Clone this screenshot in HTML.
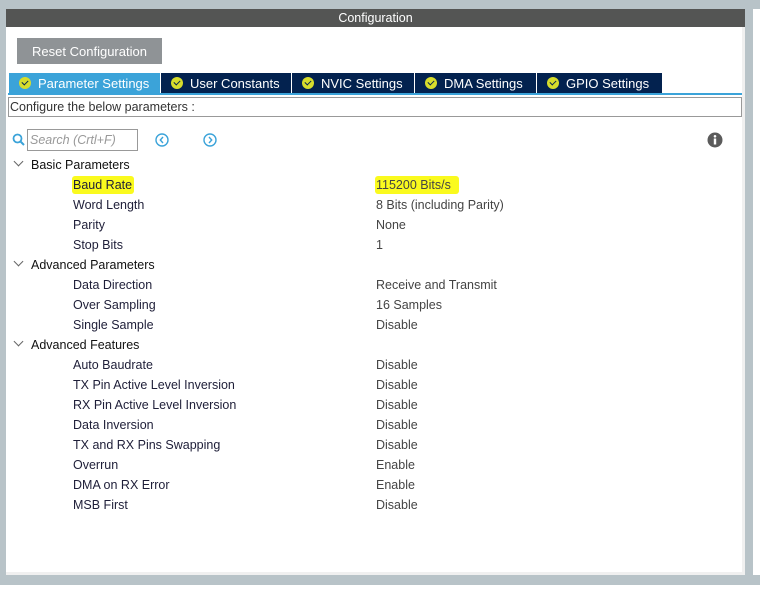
<!DOCTYPE html>
<html><head><meta charset="utf-8"><style>
*{margin:0;padding:0;box-sizing:border-box}
body{width:760px;height:594px;background:#fff;position:relative;overflow:hidden;font-family:"Liberation Sans",Arial,sans-serif;font-size:12.5px}
.a{position:absolute}
.t{position:absolute;white-space:nowrap;line-height:16px;margin-top:1px}
.tab{position:absolute;top:73px;height:20px;background:#03224f;color:#fff;font-size:13px;line-height:21px;border-right:1px solid #fff}
.tab i{position:absolute;left:10px;top:4px;width:12px;height:12px;border-radius:50%;background:#d7dd2c}
.tab i:after{content:"";position:absolute;left:3px;top:2.5px;width:5px;height:3px;border-left:1.6px solid #03224f;border-bottom:1.6px solid #03224f;transform:rotate(-45deg)}
.tab span{position:absolute;left:29px}
.k{color:#1e1e38}.v{color:#444}
.g{color:#111}
.chev{position:absolute;width:7px;height:7px;border-right:1.2px solid #666;border-bottom:1.2px solid #666;transform:rotate(45deg)}
</style></head><body>
<div class="a" style="left:0;top:0;width:760px;height:9px;background:#b8c3c8"></div>
<div class="a" style="left:0;top:0;width:6px;height:585px;background:#b8c3c8"></div>
<div class="a" style="left:745px;top:0;width:8px;height:585px;background:#b8c3c8"></div>
<div class="a" style="left:0;top:575px;width:760px;height:10px;background:#b8c3c8"></div>
<div class="a" style="left:6px;top:572px;width:739px;height:3px;background:#f0f0f0"></div>
<div class="a" style="left:742px;top:27px;width:3px;height:548px;background:#f0f0f0"></div>
<div class="a" style="left:6px;top:9px;width:739px;height:18px;background:#545554;color:#fff;font-size:12.5px;line-height:19px;text-align:center">Configuration</div>
<div class="a" style="left:17px;top:38px;width:145px;height:26px;background:#8f9396;color:#fff;font-size:13px;line-height:27px;text-align:center">Reset Configuration</div>
<div class="tab" style="left:9px;width:152px;background:#3ba3d9"><i style="background:#d7dd2c"></i><span>Parameter Settings</span></div>
<div class="tab" style="left:161px;width:131px"><i></i><span>User Constants</span></div>
<div class="tab" style="left:292px;width:123px"><i></i><span>NVIC Settings</span></div>
<div class="tab" style="left:415px;width:122px"><i></i><span>DMA Settings</span></div>
<div class="tab" style="left:537px;width:125px;border-right:none"><i></i><span>GPIO Settings</span></div>
<div class="a" style="left:8px;top:93px;width:734px;height:2px;background:#3ba3d9"></div>
<div class="a" style="left:8px;top:97px;width:734px;height:20px;border:1px solid #999;color:#333;font-size:12.5px;line-height:19px;padding-left:1px">Configure the below parameters :</div>
<svg class="a" style="left:12px;top:133px" width="14" height="14" viewBox="0 0 14 14"><circle cx="5.5" cy="5.5" r="4" fill="none" stroke="#3ba3d9" stroke-width="1.8"/><path d="M8.5 8.5L12 12" stroke="#3ba3d9" stroke-width="2"/></svg>
<div class="a" style="left:27px;top:129px;width:111px;height:22px;border:1px solid #999;color:#999;font-style:italic;font-size:12.5px;line-height:21px;padding-left:2px">Search (Crtl+F)</div>
<svg class="a" style="left:154px;top:132px" width="16" height="16"><circle cx="8" cy="8" r="6" fill="none" stroke="#3ba3d9" stroke-width="1.4"/><path d="M9 5L6.3 8L9 11" fill="none" stroke="#3ba3d9" stroke-width="1.4"/></svg>
<svg class="a" style="left:202px;top:132px" width="16" height="16"><circle cx="8" cy="8" r="6" fill="none" stroke="#3ba3d9" stroke-width="1.4"/><path d="M7 5L9.7 8L7 11" fill="none" stroke="#3ba3d9" stroke-width="1.4"/></svg>
<svg class="a" style="left:707px;top:132px" width="16" height="16"><circle cx="8" cy="8" r="7.5" fill="#5b5b5b"/><circle cx="8" cy="4.3" r="1.3" fill="#fff"/><rect x="6.8" y="6.5" width="2.4" height="6" fill="#fff"/></svg>

<div class="chev" style="left:15px;top:158px"></div><div class="t g" style="left:31px;top:156px">Basic Parameters</div>
<div class="a" style="left:72px;top:176px;width:62px;height:18px;background:#fafa1e;border-radius:3px"></div>
<div class="a" style="left:375px;top:176px;width:84px;height:18px;background:#fafa1e;border-radius:3px"></div>
<div class="t k" style="left:73px;top:176px">Baud Rate</div><div class="t v" style="left:376px;top:176px">115200 Bits/s</div>
<div class="t k" style="left:73px;top:196px">Word Length</div><div class="t v" style="left:376px;top:196px">8 Bits (including Parity)</div>
<div class="t k" style="left:73px;top:216px">Parity</div><div class="t v" style="left:376px;top:216px">None</div>
<div class="t k" style="left:73px;top:236px">Stop Bits</div><div class="t v" style="left:376px;top:236px">1</div>
<div class="chev" style="left:15px;top:258px"></div><div class="t g" style="left:31px;top:256px">Advanced Parameters</div>
<div class="t k" style="left:73px;top:276px">Data Direction</div><div class="t v" style="left:376px;top:276px">Receive and Transmit</div>
<div class="t k" style="left:73px;top:296px">Over Sampling</div><div class="t v" style="left:376px;top:296px">16 Samples</div>
<div class="t k" style="left:73px;top:316px">Single Sample</div><div class="t v" style="left:376px;top:316px">Disable</div>
<div class="chev" style="left:15px;top:338px"></div><div class="t g" style="left:31px;top:336px">Advanced Features</div>
<div class="t k" style="left:73px;top:356px">Auto Baudrate</div><div class="t v" style="left:376px;top:356px">Disable</div>
<div class="t k" style="left:73px;top:376px">TX Pin Active Level Inversion</div><div class="t v" style="left:376px;top:376px">Disable</div>
<div class="t k" style="left:73px;top:396px">RX Pin Active Level Inversion</div><div class="t v" style="left:376px;top:396px">Disable</div>
<div class="t k" style="left:73px;top:416px">Data Inversion</div><div class="t v" style="left:376px;top:416px">Disable</div>
<div class="t k" style="left:73px;top:436px">TX and RX Pins Swapping</div><div class="t v" style="left:376px;top:436px">Disable</div>
<div class="t k" style="left:73px;top:456px">Overrun</div><div class="t v" style="left:376px;top:456px">Enable</div>
<div class="t k" style="left:73px;top:476px">DMA on RX Error</div><div class="t v" style="left:376px;top:476px">Enable</div>
<div class="t k" style="left:73px;top:496px">MSB First</div><div class="t v" style="left:376px;top:496px">Disable</div>
</body></html>
